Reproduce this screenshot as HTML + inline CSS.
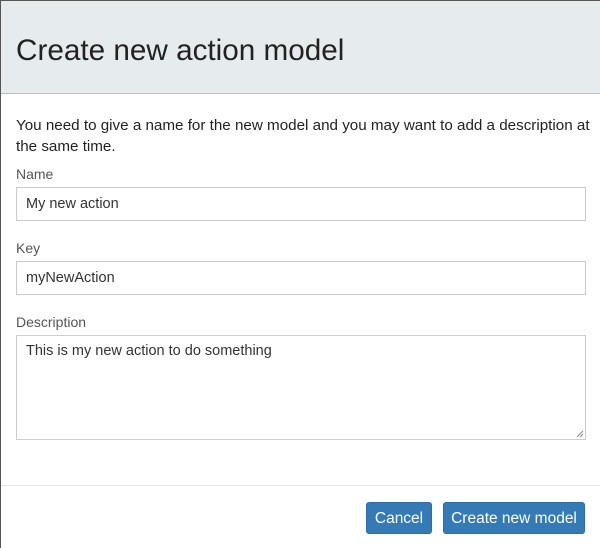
<!DOCTYPE html>
<html><head><style>
html,body{margin:0;padding:0;width:600px;height:548px;overflow:hidden;background:#fff;font-family:"Liberation Sans",sans-serif;}
.wrap{position:absolute;left:0;top:0;width:600px;height:548px;border-left:1px solid #555;border-top:1px solid #555;box-sizing:border-box;}
.hdr{position:absolute;left:0;top:0;right:0;height:92px;background:#e6ebee;border-bottom:1px solid #b8bfc4;}
.hdr h1{position:absolute;left:15px;top:32px;margin:0;font-weight:normal;font-size:29.7px;color:#222;line-height:36px;}
.p{position:absolute;left:15px;top:114px;width:578px;font-size:15.2px;line-height:21px;color:#222;}
.lbl{position:absolute;left:15px;font-size:14px;color:#555;}
.in{position:absolute;left:15px;width:570px;box-sizing:border-box;border:1px solid #ccc;font-size:14.5px;color:#333;padding-left:9px;}
.btn{position:absolute;top:501px;height:32px;background:#337ab7;border:1px solid #2e6da4;border-radius:3px;color:#fff;font-size:15.5px;line-height:31px;text-align:center;box-sizing:border-box;}
</style></head><body><div class="wrap">
<div class="hdr"><h1>Create new action model</h1></div>
<div class="p">You need to give a name for the new model and you may want to add a description at the same time.</div>
<div class="lbl" style="top:165px">Name</div>
<div class="in" style="top:186px;height:34px;line-height:32px">My new action</div>
<div class="lbl" style="top:239px">Key</div>
<div class="in" style="top:260px;height:34px;line-height:32px">myNewAction</div>
<div class="lbl" style="top:313px">Description</div>
<div class="in" style="top:334px;height:105px;padding-top:6px;line-height:18px">This is my new action to do something
<svg style="position:absolute;right:1px;bottom:1px" width="8" height="8"><path d="M1 7L7 1M4 7L7 4" stroke="#888" stroke-width="1"/></svg></div>
<div style="position:absolute;left:0;right:0;top:484px;border-top:1px solid #e5e5e5"></div>
<div class="btn" style="left:365px;width:66px">Cancel</div>
<div class="btn" style="left:442px;width:142px">Create new model</div>
</div></body></html>
